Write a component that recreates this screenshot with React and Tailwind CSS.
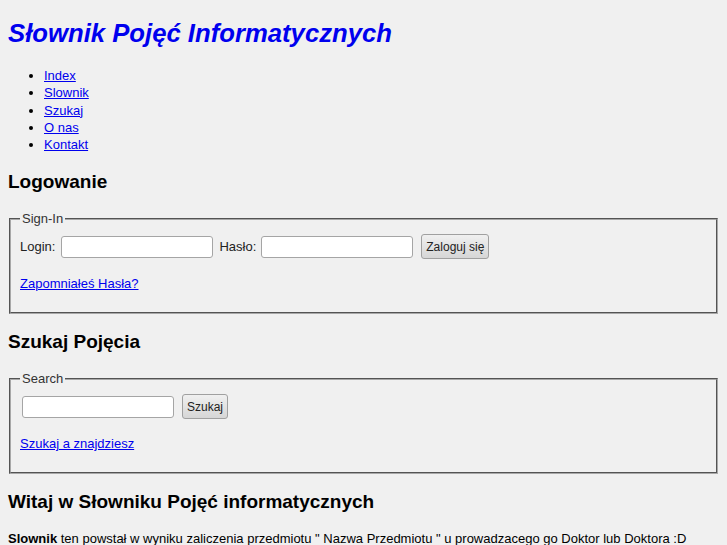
import React from "react";

const links = ["Index", "Slownik", "Szukaj", "O nas", "Kontakt"];

const inputCls =
    "h-[22px] w-[152px] rounded-[3px] border border-[#a5a5a5] bg-white px-1 text-[13px] outline-none";
const buttonCls =
    "h-[25px] rounded-[3px] border border-[#a0a0a0] bg-gradient-to-b from-[#f0f0f0] to-[#d6d6d6] px-[4px] text-[12px] text-[#222]";
const linkCls = "text-[#0000ee] underline";

const Box = ({ title, children }) => (
    <fieldset className="mx-[1px] border-2 border-[#a8a8a8] [border-style:groove] px-[9px] pt-0 pb-[21px]">
        <legend className="px-[2px] text-[13px] leading-[15px] text-[#333]">{title}</legend>
        {children}
    </fieldset>
);

const App = () => {
    return (
        <div className="min-h-[545px] bg-[#f0f0f0] px-2 pt-[18px] text-[13px] text-black font-['Liberation_Sans',Arial,sans-serif]">
            <h1 className="text-[25.7px] font-bold italic leading-[30px] text-[#0000ee]">
                Słownik Pojęć Informatycznych
            </h1>

            <ul className="mt-[19px] list-disc pl-[36px] leading-[17.3px]">
                {links.map((l) => (
                    <li key={l}>
                        <a href="#" className={linkCls}>{l}</a>
                    </li>
                ))}
            </ul>

            <h2 className="mt-[18px] text-[19px] font-bold leading-[22px]">Logowanie</h2>

            <div className="mt-[18px]">
                <Box title="Sign-In">
                    <div className="mt-[8px] flex h-[25px] items-center">
                        <label className="mr-[6px] text-[#222]">Login:</label>
                        <input type="text" className={inputCls} />
                        <label className="ml-[6px] mr-[5px] text-[#222]">Hasło:</label>
                        <input type="text" className={inputCls} />
                        <button className={`ml-[8px] ${buttonCls}`}>Zaloguj się</button>
                    </div>
                    <p className="mt-[17px] leading-[15px]">
                        <a href="#" className={linkCls}>Zapomniałeś Hasła?</a>
                    </p>
                </Box>
            </div>

            <h2 className="mt-[17px] text-[19px] font-bold leading-[22px]">Szukaj Pojęcia</h2>

            <div className="mt-[18px]">
                <Box title="Search">
                    <div className="mt-[8px] flex h-[25px] items-center">
                        <input type="text" className={`ml-[2px] ${inputCls}`} />
                        <button className={`ml-[8px] ${buttonCls}`}>Szukaj</button>
                    </div>
                    <p className="mt-[17px] leading-[15px]">
                        <a href="#" className={linkCls}>Szukaj a znajdziesz</a>
                    </p>
                </Box>
            </div>

            <h2 className="mt-[17px] text-[19px] font-bold leading-[22px]">
                Witaj w Słowniku Pojęć informatycznych
            </h2>

            <p className="mt-[18px] leading-[15px]">
                <b>Slownik</b> ten powstał w wyniku zaliczenia przedmiotu " Nazwa Przedmiotu " u prowadzacego go Doktor lub Doktora :D
            </p>
        </div>
    );
};

export default App;
